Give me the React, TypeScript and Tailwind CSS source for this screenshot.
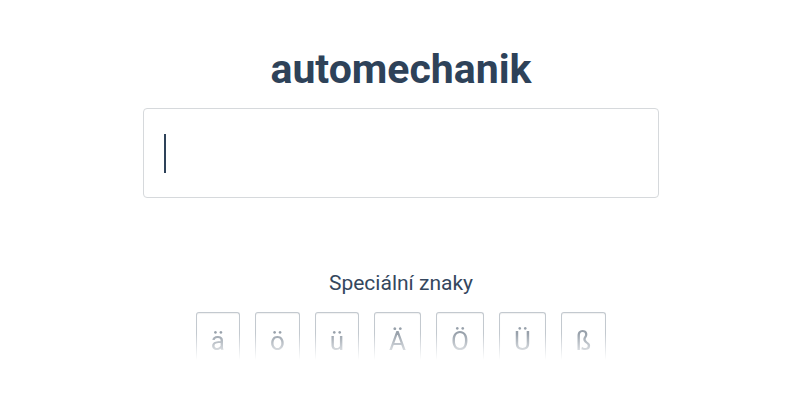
import React from "react";

const chars = ["ä", "ö", "ü", "Ä", "Ö", "Ü", "ß"];

export default function App() {
  return (
    <div className="w-full h-[400px] bg-white flex flex-col items-center overflow-hidden font-['Roboto','Liberation_Sans',sans-serif]">
      <h1 className="mt-[48px] ml-[2px] text-[41px] leading-[42px] font-bold text-[#2e4259]">
        automechanik
      </h1>
      <div className="mt-[18px] ml-[2px] w-[516px] h-[90px] border border-[#d6d9dc] rounded-[4px] flex items-center pl-[20px]">
        <div className="w-[2px] h-[39px] bg-[#2e4259]" />
      </div>
      <div className="mt-[70px] ml-[2px] text-[21px] leading-[30px] text-[#34475e]">Speciální znaky</div>
      <div className="mt-[14px] ml-[2px] flex gap-[15px] [mask-image:linear-gradient(to_bottom,black_45%,transparent_100%)]">
        {chars.map((c) => (
          <div
            key={c}
            className="h-[48px] px-[14px] border border-b-0 border-[#c3c9cf] rounded-t-[3px] shadow-[inset_0_1px_1px_rgba(0,0,0,0.06)] flex items-start justify-center pt-[11px] text-[26px] leading-[34px] font-normal text-[#98a1ab]"
          >
            {c}
          </div>
        ))}
      </div>
    </div>
  );
}
